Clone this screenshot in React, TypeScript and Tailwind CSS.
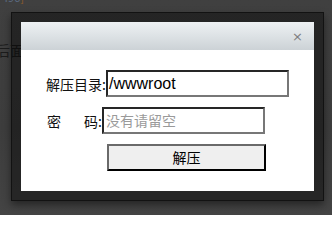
import React from "react";

export default function App() {
  return (
    <div
      className="relative w-[332px] h-[215px] overflow-hidden bg-[linear-gradient(180deg,#404040_0%,#3d3d3d_60%,#444444_100%)]"
      style={{ fontFamily: '"Noto Sans CJK SC", "Liberation Sans", sans-serif' }}
    >
      {/* dimmed page behind the overlay */}
      <span className="absolute left-[2px] top-[-9px] text-[11px] leading-[13px] text-[#5b6b82]">
        496<span className="text-[#8a5a2a]">]</span>
      </span>
      <span className="absolute left-[-4px] top-[42px] text-[14px] leading-[16px] text-[#1c1c1c]">
        后面
      </span>

      {/* modal frame */}
      <div className="absolute left-[11px] top-[12px] w-[313px] h-[189px] border border-[#121212] bg-[rgba(0,0,0,0.42)] p-[9px] shadow-[0_4px_8px_rgba(0,0,0,0.45)]">
        <div className="flex h-full w-full flex-col bg-white">
          {/* title bar */}
          <div className="flex h-[28px] items-center justify-end bg-[linear-gradient(180deg,#eef1f3_0%,#dde2e5_50%,#ccd2d6_100%)] pr-[11px]">
            <span
              className="text-[13px] leading-none text-[#7e7e7e]"
              style={{ fontFamily: '"DejaVu Sans", sans-serif' }}
            >
              ×
            </span>
          </div>

          {/* body */}
          <div className="flex flex-col gap-[10px] pt-[20px]">
            <div className="flex h-[27px] items-center">
              <span className="w-[85px] pl-[25px] text-[14px] leading-none text-[#111]">
                解压目录:
              </span>
              <div
                className="flex h-[27px] w-[183px] items-center border-2 border-t-[#262626] border-l-[#262626] border-r-[#777] border-b-[#777] pl-[1px] text-[16px] text-black"
                style={{ fontFamily: '"Liberation Sans", Arial, sans-serif' }}
              >
                /wwwroot
              </div>
            </div>

            <div className="flex h-[27px] items-center">
              <span className="flex w-[81px] pl-[26px] text-[14px] leading-none text-[#111]">
                <span>密</span>
                <span className="w-[24px]" />
                <span>码:</span>
              </span>
              <div className="flex h-[27px] w-[163px] items-center border-2 border-t-[#262626] border-l-[#262626] border-r-[#777] border-b-[#777] pl-[2px] text-[14px] text-[#9a9a9a]">
                没有请留空
              </div>
            </div>

            <div className="flex h-[27px] pl-[86px]">
              <div className="flex h-[27px] w-[159px] items-center justify-center border-2 border-t-[#6a6a6a] border-l-[#6a6a6a] border-r-black border-b-black bg-[#efefef] text-[14px] text-black">
                解压
              </div>
            </div>
          </div>
        </div>
      </div>
    </div>
  );
}
